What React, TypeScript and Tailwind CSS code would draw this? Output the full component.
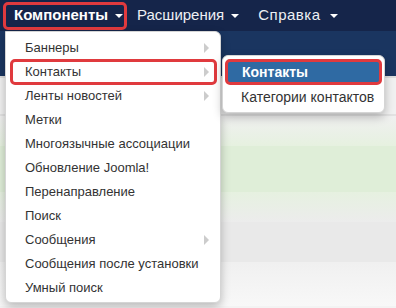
import React from "react";

const Caret = ({ className = "" }: { className?: string }) => (
  <span className={"inline-block w-0 h-0 border-x-[4px] border-x-transparent border-t-[4px] border-t-white align-middle " + className} />
);

const RightArrow = () => (
  <span className="absolute right-[11px] top-1/2 -translate-y-1/2 w-0 h-0 border-y-[5px] border-y-transparent border-l-[5px] border-l-[#cccccc]" />
);

const items: { label: string; arrow?: boolean; hl?: boolean }[] = [
  { label: "Баннеры", arrow: true },
  { label: "Контакты", arrow: true, hl: true },
  { label: "Ленты новостей", arrow: true },
  { label: "Метки" },
  { label: "Многоязычные ассоциации" },
  { label: "Обновление Joomla!" },
  { label: "Перенаправление" },
  { label: "Поиск" },
  { label: "Сообщения", arrow: true },
  { label: "Сообщения после установки" },
  { label: "Умный поиск" },
];

export default function App() {
  return (
    <div
      className="relative w-[396px] h-[308px] overflow-hidden bg-[#f3f3f3]"
      style={{ fontFamily: '"Liberation Sans", Arial, sans-serif' }}
    >
      {/* top navbar */}
      <div className="h-[31px] bg-[#15254a] flex items-center text-[15px] text-white">
        <div className="ml-[3px] h-[28px] w-[124px] rounded-[5px] border-[3px] border-[#e03a3e] flex items-center pl-[8px] font-bold">
          Компоненты
          <Caret className="ml-[7px]" />
        </div>
        <div className="ml-[10px] flex items-center text-[#eef0f4]">
          Расширения
          <Caret className="ml-[7px]" />
        </div>
        <div className="ml-[19px] flex items-center text-[#eef0f4] tracking-[0.5px]">
          Справка
          <Caret className="ml-[9px]" />
        </div>
      </div>
      {/* sub header band */}
      <div className="h-[45px] bg-[#1a3560]" />
      {/* blurred page background */}
      <div className="h-[2px] bg-[#dcdcdc]" />
      <div className="h-[36px] bg-[#f1f1f1]" />
      <div className="h-[2px] bg-[#e2e2e2]" />
      <div className="h-[30px] bg-gradient-to-b from-[#f0f0f0] to-[#e6f1e0]" />
      <div className="h-[46px] bg-[#dfeed8]" />
      <div className="h-[30px] bg-gradient-to-b from-[#e6f1e0] to-[#ececec]" />
      <div className="h-[40px] bg-[#e9e9e9]" />
      <div className="h-[44px] bg-gradient-to-b from-[#f0f0f0] to-[#f8f8f8]" />

      {/* main dropdown */}
      <div className="absolute left-[5px] top-[31px] w-[216px] h-[272px] bg-white rounded-b-[6px] rounded-tr-[6px] shadow-[0_4px_10px_rgba(0,0,0,0.25)] border border-[#d5d5d5] pt-[4px] text-[13px] text-[#333333]">
        {items.map((it) => (
          <div key={it.label} className="relative h-[24px] flex items-center pl-[19px]">
            {it.hl && (
              <div className="absolute left-[4px] right-[3px] top-[-1px] bottom-[-1px] rounded-[5px] border-[3px] border-[#e03a3e]" />
            )}
            {it.label}
            {it.arrow && <RightArrow />}
          </div>
        ))}
      </div>

      {/* submenu */}
      <div className="absolute left-[222px] top-[55px] w-[163px] h-[58px] bg-white rounded-[6px] shadow-[0_4px_10px_rgba(0,0,0,0.25)] border border-[#d5d5d5] pt-[3px] text-[14px]">
        <div className="mx-[2px] h-[26px] rounded-[5px] border-[3px] border-[#e03a3e] bg-[#2f6aa3] flex items-center pl-[14px] text-white font-bold">
          Контакты
        </div>
        <div className="h-[24px] flex items-center pl-[18px] text-[#333333]">Категории контактов</div>
      </div>
    </div>
  );
}
